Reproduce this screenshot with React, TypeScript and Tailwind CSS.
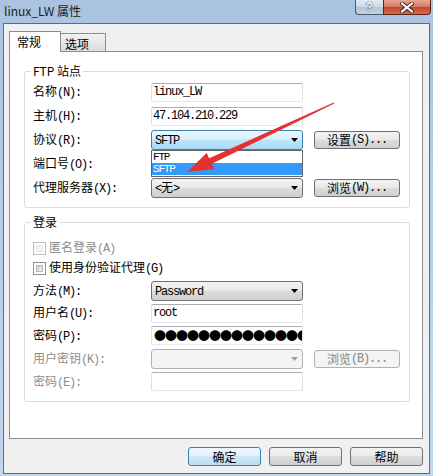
import React from "react";

const cjk = "font-['Noto_Sans_CJK_SC',sans-serif]";
const mono = "font-['Liberation_Mono','Noto_Sans_CJK_SC',monospace] tracking-[-1.2px]";
const btnFace =
  "bg-[linear-gradient(#f2f2f2,#ebebeb_45%,#dddddd_50%,#cfcfcf)] border-[#707070]";

const Hint = ({ children }: { children: React.ReactNode }) => (
  <span className={`${mono} text-[12px]`}>{children}</span>
);

const Label = ({
  text,
  hint,
  disabled = false,
}: {
  text: string;
  hint: string;
  disabled?: boolean;
}) => (
  <div
    className={`w-[118px] shrink-0 text-[12px] leading-[14px] ${cjk} ${
      disabled ? "text-[#8d8d8d]" : "text-black"
    }`}
  >
    {text}
    <Hint>{hint}</Hint>
  </div>
);

const Arrow = ({ disabled = false }: { disabled?: boolean }) => (
  <svg width="7" height="4" viewBox="0 0 7 4">
    <polygon points="0,0 7,0 3.5,4" fill={disabled ? "#a0a0a0" : "#000"} />
  </svg>
);

const Input = ({ children }: { children?: React.ReactNode }) => (
  <div className="flex h-[19px] w-[152px] shrink-0 items-center overflow-hidden rounded-[2px] border border-[#dbdfe6] border-t-[#abadb3] border-b-[#e3e9ef] bg-white pl-[1px] text-[12px] leading-[14px]">
    {children}
  </div>
);

const Combo = ({
  children,
  focused = false,
  disabled = false,
}: {
  children?: React.ReactNode;
  focused?: boolean;
  disabled?: boolean;
}) => {
  const face = disabled
    ? "bg-[#f4f4f4] border-[#adb2b5]"
    : focused
      ? "bg-[linear-gradient(#eaf6fd,#d9f0fc_45%,#bee6fd_50%,#a7d9f5)] border-[#3c7fb1]"
      : btnFace;
  return (
    <div
      className={`flex h-[20px] w-[152px] shrink-0 items-center justify-between rounded-[3px] border pr-[4px] pl-[3px] text-[12px] leading-[14px] ${face}`}
    >
      <span>{children}</span>
      <Arrow disabled={disabled} />
    </div>
  );
};

const Button = ({
  children,
  disabled = false,
  isDefault = false,
  className = "",
}: {
  children: React.ReactNode;
  disabled?: boolean;
  isDefault?: boolean;
  className?: string;
}) => {
  const face = disabled
    ? "bg-[#f4f4f4] border-[#adb2b5] text-[#838383]"
    : isDefault
      ? "bg-[linear-gradient(#eef7fd,#e2f1fb_45%,#cfe7f8_50%,#bddcf3)] border-[#3c7fb1] text-black"
      : `${btnFace} text-black`;
  return (
    <div
      className={`flex shrink-0 items-center justify-center rounded-[3px] border text-[12px] leading-[14px] ${cjk} ${face} ${className}`}
    >
      {children}
    </div>
  );
};

const Check = ({ disabled = false }: { disabled?: boolean }) => (
  <div
    className={`h-[13px] w-[13px] shrink-0 border bg-white p-[2px] ${
      disabled ? "border-[#bcbcbc]" : "border-[#8e8f8f]"
    }`}
  >
    <div
      className={`h-full w-full border ${
        disabled
          ? "border-[#e6e6e6] bg-[#f4f4f4]"
          : "border-[#b3b7bc] bg-linear-to-br from-[#c6cacf] to-[#f4f4f4]"
      }`}
    />
  </div>
);

const Group = ({
  title,
  className = "",
  children,
}: {
  title: string;
  className?: string;
  children: React.ReactNode;
}) => (
  <div
    className={`relative ml-[14px] w-[386px] rounded-[3px] border border-[#d5dfe5] ${className}`}
  >
    <span
      className={`absolute -top-[8px] left-[6px] bg-white px-[2px] text-[12px] leading-[14px] text-black ${cjk}`}
    >
      {title}
    </span>
    {children}
  </div>
);

export default function App() {
  return (
    <div className={`relative flex h-[476px] w-[433px] flex-col overflow-hidden bg-linear-to-b from-[#a9c3e1] to-[#c2d7ee] ${cjk}`}>
      {/* title bar */}
      <div className="flex h-[23px] shrink-0 items-start justify-between">
        <div className="pt-[4px] pl-[4px] text-[12px] leading-[14px] text-[#1b1b1b]">
          linux_LW 属性
        </div>
        <div className="mr-[2px] flex">
          <div className="flex h-[15px] w-[28px] items-center justify-center rounded-bl-[4px] border border-t-0 border-r-0 border-[#4b5a6d] bg-[linear-gradient(#e3ebf4,#cdd9e7_50%,#b4c3d5_51%,#c6d3e2)]">
            <span className="font-['Liberation_Sans',sans-serif] text-[12px] leading-none font-bold text-white [text-shadow:0_0_1px_#1c2a3a,0_0_1px_#1c2a3a]">
              ?
            </span>
          </div>
          <div className="flex h-[15px] w-[48px] items-center justify-center rounded-br-[4px] border border-t-0 border-[#5a2417] bg-[linear-gradient(#e9a797,#d8765f_50%,#c7452a_51%,#d36a4b)]">
            <svg width="14" height="11" viewBox="0 0 14 11">
              <path d="M2 1.5 L12 9.5 M12 1.5 L2 9.5" stroke="#3b1a12" strokeWidth="4" strokeLinecap="square" />
              <path d="M2 1.5 L12 9.5 M12 1.5 L2 9.5" stroke="#fff" strokeWidth="2.2" strokeLinecap="square" />
            </svg>
          </div>
        </div>
      </div>

      {/* client area */}
      <div className="ml-[3px] flex h-[451px] w-[427px] shrink-0 flex-col border border-[#5d6d80] bg-[#f0f0f0]">
        {/* tabs */}
        <div className="mt-[7px] ml-[5px] flex h-[20px] items-end">
          <div className="relative z-10 -mb-px flex h-[21px] w-[52px] items-center border border-b-0 border-[#898c95] bg-white pl-[7px] text-[12px] text-black">
            常规
          </div>
          <div className="-ml-px flex h-[18px] w-[46px] items-center border border-b-0 border-[#898c95] bg-linear-to-b from-[#f2f2f2] to-[#dcdcdc] pt-[2px] pl-[4px] text-[12px] text-black">
            选项
          </div>
        </div>

        {/* panel */}
        <div className="ml-[5px] flex h-[388px] w-[414px] flex-col border border-[#898c95] bg-white">
          <Group title="FTP 站点" className="mt-[19px] pt-[8px] pb-[7px]">
            <div className="flex h-[24px] items-center pl-[8px]">
              <Label text="名称" hint="(N):" />
              <Input>
                <span className={mono}>linux_LW</span>
              </Input>
            </div>
            <div className="flex h-[24px] items-center pl-[8px]">
              <Label text="主机" hint="(H):" />
              <Input>
                <span className={mono}>47.104.210.229</span>
              </Input>
            </div>
            <div className="flex h-[24px] items-center pl-[8px]">
              <Label text="协议" hint="(R):" />
              <div className="relative z-20">
                <Combo focused>
                  <span className={mono}>SFTP</span>
                </Combo>
                <div className="absolute top-full left-0 flex w-[152px] flex-col border border-[#646464] bg-white pb-[1px]">
                  <div className={`h-[12px] overflow-hidden pl-[1px] text-[11px] leading-[12px] ${mono}`}>FTP</div>
                  <div className={`h-[12px] overflow-hidden bg-[#3399ff] pl-[1px] text-[11px] leading-[12px] text-white ${mono}`}>
                    SFTP
                  </div>
                </div>
              </div>
              <Button className="ml-[11px] h-[18px] w-[86px]">
                设置<Hint>(S)...</Hint>
              </Button>
            </div>
            <div className="flex h-[24px] items-center pl-[8px]">
              <Label text="端口号" hint="(O):" />
            </div>
            <div className="flex h-[24px] items-center pl-[8px]">
              <Label text="代理服务器" hint="(X):" />
              <Combo>
                <Hint>&lt;</Hint>无<Hint>&gt;</Hint>
              </Combo>
              <Button className="ml-[11px] h-[18px] w-[86px]">
                浏览<Hint>(W)...</Hint>
              </Button>
            </div>
          </Group>

          <Group title="登录" className="mt-[14px] pt-[15px] pb-[8px]">
            <div className="flex h-[20px] items-center gap-[3px] pl-[8px] text-[12px] leading-[14px] text-[#8d8d8d]">
              <Check disabled />
              <span>
                匿名登录<Hint>(A)</Hint>
              </span>
            </div>
            <div className="flex h-[20px] items-center gap-[3px] pl-[8px] text-[12px] leading-[14px] text-black">
              <Check />
              <span>
                使用身份验证代理<Hint>(G)</Hint>
              </span>
            </div>
            <div className="mt-[2px] flex h-[22px] items-center pl-[8px]">
              <Label text="方法" hint="(M):" />
              <Combo>
                <span className={mono}>Password</span>
              </Combo>
            </div>
            <div className="flex h-[22px] items-center pl-[8px]">
              <Label text="用户名" hint="(U):" />
              <Input>
                <span className={mono}>root</span>
              </Input>
            </div>
            <div className="flex h-[23px] items-center pl-[8px]">
              <Label text="密码" hint="(P):" />
              <Input>
                <span className="pl-[1px] text-[12px] leading-none tracking-[-1px] whitespace-nowrap text-black">
                  ●●●●●●●●●●●●●●
                </span>
              </Input>
            </div>
            <div className="flex h-[23px] items-center pl-[8px]">
              <Label text="用户密钥" hint="(K):" disabled />
              <Combo disabled />
              <Button disabled className="ml-[11px] h-[18px] w-[86px]">
                浏览<Hint>(B)...</Hint>
              </Button>
            </div>
            <div className="flex h-[23px] items-center pl-[8px]">
              <Label text="密码" hint="(E):" disabled />
              <Input />
            </div>
          </Group>
        </div>

        {/* dialog buttons */}
        <div className="mt-[8px] flex justify-end gap-[8px] pr-[6px]">
          <Button isDefault className="h-[19px] w-[73px]">
            确定
          </Button>
          <Button className="h-[19px] w-[73px]">取消</Button>
          <Button className="h-[19px] w-[73px]">帮助</Button>
        </div>
      </div>

      {/* red annotation arrow */}
      <svg
        className="pointer-events-none absolute inset-0 z-30"
        width="433"
        height="476"
        viewBox="0 0 433 476"
      >
        <polygon
          points="187,172 214.3,169.1 211.8,163.7 334.3,103.6 333.7,102.4 209.2,158.3 206.7,152.9"
          fill="#e5312f"
        />
      </svg>
    </div>
  );
}
